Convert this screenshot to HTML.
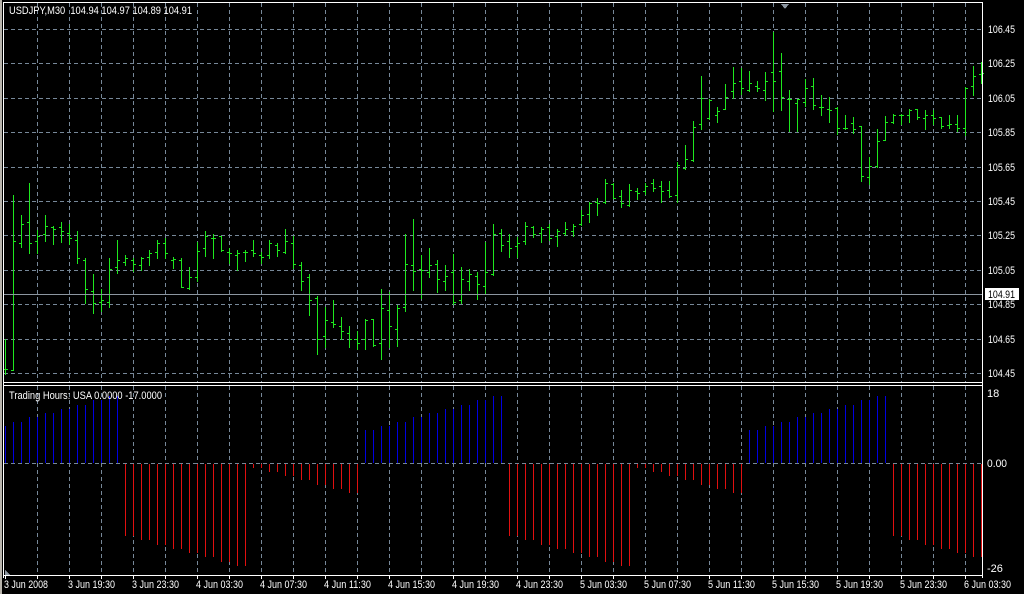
<!DOCTYPE html>
<html><head><meta charset="utf-8"><style>
html,body{margin:0;padding:0;background:#000;width:1024px;height:594px;overflow:hidden}
svg{display:block}
text{font-family:"Liberation Sans",sans-serif;font-size:11px;fill:#fff}
</style></head><body>
<svg id="s" width="1024" height="594" viewBox="0 0 1024 594" xmlns="http://www.w3.org/2000/svg" shape-rendering="crispEdges">
<rect width="1024" height="594" fill="#000"/>
<rect x="0" y="0" width="2" height="594" fill="#b8b4ac"/>
<g id="grid" stroke="#778899" stroke-width="1" stroke-dasharray="4,3"></g>
<g id="ind"></g>
<g id="bars" fill="#1ee81e"></g>
<line x1="4" y1="294.5" x2="982" y2="294.5" stroke="#8c96a0"/>
<g stroke="#fff" stroke-width="1" fill="none">
<line x1="3.5" y1="2.5" x2="982.5" y2="2.5"/>
<line x1="3.5" y1="2" x2="3.5" y2="578"/>
<line x1="982.5" y1="2" x2="982.5" y2="578"/>
<line x1="3" y1="382.5" x2="983" y2="382.5"/>
<line x1="3" y1="385.5" x2="983" y2="385.5"/>
<line x1="3" y1="575.5" x2="983" y2="575.5"/>
</g>
<g id="ticks" stroke="#fff"></g>
<polygon points="781,4 789,4 785,9" fill="#8c96a0"/>
<polygon points="5,570 5,575 10,575" fill="#8c96a0"/>
<text x="9" y="14" textLength="183" lengthAdjust="spacingAndGlyphs">USDJPY,M30&#160; 104.94 104.97 104.89 104.91</text>
<text x="9" y="399" textLength="153" lengthAdjust="spacingAndGlyphs">Trading Hours: USA 0.0000 -17.0000</text>
<g>
<text x="988" y="33" textLength="27" lengthAdjust="spacingAndGlyphs">106.45</text>
<text x="988" y="67" textLength="27" lengthAdjust="spacingAndGlyphs">106.25</text>
<text x="988" y="102" textLength="27" lengthAdjust="spacingAndGlyphs">106.05</text>
<text x="988" y="136" textLength="27" lengthAdjust="spacingAndGlyphs">105.85</text>
<text x="988" y="171" textLength="27" lengthAdjust="spacingAndGlyphs">105.65</text>
<text x="988" y="205" textLength="27" lengthAdjust="spacingAndGlyphs">105.45</text>
<text x="988" y="239" textLength="27" lengthAdjust="spacingAndGlyphs">105.25</text>
<text x="988" y="274" textLength="27" lengthAdjust="spacingAndGlyphs">105.05</text>
<text x="988" y="308" textLength="27" lengthAdjust="spacingAndGlyphs">104.85</text>
<text x="988" y="343" textLength="27" lengthAdjust="spacingAndGlyphs">104.65</text>
<text x="988" y="377" textLength="27" lengthAdjust="spacingAndGlyphs">104.45</text>
<rect x="985" y="288" width="34" height="12" fill="#fff"/>
<text x="988" y="298" style="fill:#000" textLength="27" lengthAdjust="spacingAndGlyphs">104.91</text>
<text x="987" y="397">18</text>
<text x="987" y="467" textLength="20" lengthAdjust="spacingAndGlyphs">0.00</text>
<text x="987" y="572">-26</text>
</g>
<g>
<text x="4" y="588" textLength="44" lengthAdjust="spacingAndGlyphs">3 Jun 2008</text>
<text x="68" y="588" textLength="47" lengthAdjust="spacingAndGlyphs">3 Jun 19:30</text>
<text x="132" y="588" textLength="47" lengthAdjust="spacingAndGlyphs">3 Jun 23:30</text>
<text x="196" y="588" textLength="47" lengthAdjust="spacingAndGlyphs">4 Jun 03:30</text>
<text x="260" y="588" textLength="47" lengthAdjust="spacingAndGlyphs">4 Jun 07:30</text>
<text x="324" y="588" textLength="47" lengthAdjust="spacingAndGlyphs">4 Jun 11:30</text>
<text x="388" y="588" textLength="47" lengthAdjust="spacingAndGlyphs">4 Jun 15:30</text>
<text x="452" y="588" textLength="47" lengthAdjust="spacingAndGlyphs">4 Jun 19:30</text>
<text x="516" y="588" textLength="47" lengthAdjust="spacingAndGlyphs">4 Jun 23:30</text>
<text x="580" y="588" textLength="47" lengthAdjust="spacingAndGlyphs">5 Jun 03:30</text>
<text x="644" y="588" textLength="47" lengthAdjust="spacingAndGlyphs">5 Jun 07:30</text>
<text x="708" y="588" textLength="47" lengthAdjust="spacingAndGlyphs">5 Jun 11:30</text>
<text x="772" y="588" textLength="47" lengthAdjust="spacingAndGlyphs">5 Jun 15:30</text>
<text x="836" y="588" textLength="47" lengthAdjust="spacingAndGlyphs">5 Jun 19:30</text>
<text x="900" y="588" textLength="47" lengthAdjust="spacingAndGlyphs">5 Jun 23:30</text>
<text x="964" y="588" textLength="47" lengthAdjust="spacingAndGlyphs">6 Jun 03:30</text>
</g>
</svg>
<script>
var NS="http://www.w3.org/2000/svg";
function el(p,t,a){var e=document.createElementNS(NS,t);for(var k in a)e.setAttribute(k,a[k]);p.appendChild(e);return e;}
var g=document.getElementById('grid');
for(var x=37;x<982;x+=32){el(g,'line',{x1:x+.5,y1:3,x2:x+.5,y2:382});el(g,'line',{x1:x+.5,y1:386,x2:x+.5,y2:575});}
for(var k=0;k<11;k++){var y=Math.round(29+34.4*k)+.5;el(g,'line',{x1:4,y1:y,x2:982,y2:y});}
el(g,'line',{x1:4,y1:463.5,x2:982,y2:463.5});
var tk=document.getElementById('ticks');
for(var x=5;x<982;x+=32){el(tk,'line',{x1:x+.5,y1:576,x2:x+.5,y2:579});}
var B=[[339,374,369,369],[195,370,370,241],[215,247,243,224],[183,253,222,243],[230,253,241,236],[215,241,234,226],[226,244,227,229],[222,242,227,231],[224,244,233,238],[231,263,240,258],
[258,303,260,289],[274,313,291,303],[289,311,302,300],[258,307,302,269],[240,273,267,260],[255,265,262,258],[258,271,260,264],[257,270,265,258],[250,265,257,253],[240,258,252,243],
[238,258,243,253],[257,268,260,259],[258,287,260,287],[267,289,288,277],[242,281,277,251],[231,256,248,236],[234,258,238,238],[236,251,236,250],[248,263,252,253],[250,270,255,253],
[250,261,252,252],[240,256,250,253],[252,263,255,257],[240,258,255,243],[243,256,245,250],[229,253,252,241],[236,268,243,264],[262,290,265,281],[274,315,277,300],[296,354,298,339],
[307,347,336,320],[300,327,322,324],[317,339,326,331],[326,347,333,339],[331,349,339,343],[319,349,339,320],[319,346,319,345],[289,359,343,308],[292,347,310,326],[305,346,329,308],
[234,311,307,264],[219,290,265,271],[255,298,269,270],[248,277,272,265],[260,292,264,279],[265,290,281,276],[254,304,272,302],[267,303,300,279],[269,290,281,274],[272,299,276,284],
[242,294,286,272],[224,275,274,234],[229,251,233,245],[234,257,241,248],[237,257,246,243],[222,244,241,226],[226,237,227,234],[227,242,233,229],[224,240,227,238],[229,246,236,231],
[222,235,233,229],[224,236,231,226],[210,225,224,215],[202,222,214,203],[198,215,202,203],[179,203,202,183],[183,198,184,198],[190,207,196,203],[184,206,205,190],[188,199,191,193],
[183,194,191,186],[179,191,183,188],[181,202,186,191],[181,197,190,196],[162,202,195,165],[145,169,168,159],[121,161,160,127],[76,129,124,98],[99,119,118,100],[107,122,115,111],
[84,109,109,97],[67,98,91,83],[68,94,81,88],[71,91,90,83],[81,91,86,88],[72,100,90,81],[32,111,72,81],[53,110,71,97],[90,131,99,99],[99,131,103,99],
[79,106,102,88],[78,109,86,105],[95,115,107,107],[97,122,109,110],[107,134,108,128],[115,129,128,128],[117,133,123,129],[126,181,126,176],[157,184,177,166],[129,167,166,141],
[116,140,140,122],[114,123,122,115],[114,124,115,115],[109,122,115,110],[109,119,109,117],[110,129,118,115],[110,124,115,118],[117,128,117,126],[115,128,125,124],[115,131,124,128],
[87,135,128,88],[66,95,86,76],[62,83,74,73]];
var bg=document.getElementById('bars');
B.forEach(function(b,i){var x=5+8*i;
el(bg,'rect',{x:x,y:b[0],width:1,height:b[1]-b[0]+1});
el(bg,'rect',{x:x-2,y:b[2],width:2,height:1});
el(bg,'rect',{x:x+1,y:b[3],width:2,height:1});});
var blue=[430,430,426,426,422,422,417,417,413,413,409,409,405,405,400,400,396,396];
var deep=[536,536,540,540,545,545,549,549,553,553,557,557,562,562,566,566];
var small=[468,468,472,472,476,476,480,480,485,485,489,489,493,493];
var V=[];
blue.slice(3).forEach(function(v){V.push(['b',v]);});
deep.forEach(function(v){V.push(['r',v]);});
small.forEach(function(v){V.push(['r',v]);});
blue.forEach(function(v){V.push(['b',v]);});
deep.forEach(function(v){V.push(['r',v]);});
small.forEach(function(v){V.push(['r',v]);});
blue.forEach(function(v){V.push(['b',v]);});
deep.forEach(function(v){V.push(['r',v]);});
var ig=document.getElementById('ind');
for(var i=0;i<123&&i<V.length;i++){var x=5+8*i,v=V[i];
if(v[0]=='b')el(ig,'rect',{x:x,y:v[1],width:1,height:463-v[1],fill:'#0000e0'});
else el(ig,'rect',{x:x,y:464,width:1,height:v[1]-464,fill:'#e01010'});}
</script>
</body></html>
